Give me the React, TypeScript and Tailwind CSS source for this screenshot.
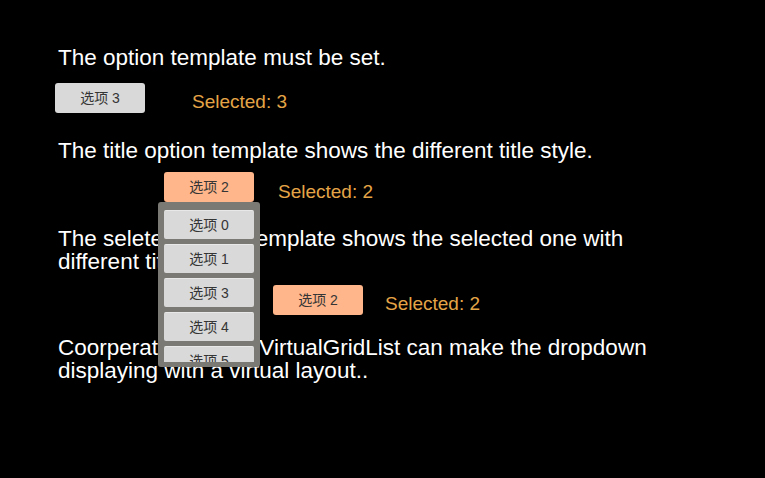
import React from 'react';

const FONT = { fontFamily: '"Liberation Sans", Arial, "Noto Sans CJK SC", sans-serif' };

const OPTIONS = ['选项 0', '选项 1', '选项 3', '选项 4', '选项 5', '选项 6'];

function Picker({ label, tone, open }: { label: string; tone: 'grey' | 'peach'; open?: boolean }) {
  return (
    <div className="relative">
      <button
        className={`w-[90px] h-[30px] rounded-[3px] text-[14px] text-[#353535] flex items-center justify-center ${
          tone === 'peach' ? 'bg-[#ffb68a]' : 'bg-[#d9d9d9]'
        }`}
      >
        {label}
      </button>
      {open && (
        <div className="absolute left-[-6px] top-[30px] w-[102px] h-[165px] bg-[#7a7973] rounded-[3px] px-[6px] pt-[8px] pb-[5px] z-10">
          <div className="h-full overflow-hidden flex flex-col gap-[5px]">
            {OPTIONS.map((o) => (
              <div
                key={o}
                className="h-[29px] shrink-0 bg-[#d9d9d9] border-t border-[#e8e8e8] rounded-[2px] text-[14px] text-[#353535] flex items-center justify-center"
              >
                {o}
              </div>
            ))}
          </div>
        </div>
      )}
    </div>
  );
}

function Row({ label, tone, open, selected, className, gap }: { label: string; tone: 'grey' | 'peach'; open?: boolean; selected: string; className: string; gap: string }) {
  return (
    <div className={`flex items-center h-[30px] ${className}`}>
      <Picker label={label} tone={tone} open={open} />
      <span className={`${gap} text-[19px] leading-[22px] text-[#e5a547]`}>Selected: {selected}</span>
    </div>
  );
}

export default function App() {
  return (
    <div className="w-[765px] h-[478px] bg-black text-white overflow-hidden" style={FONT}>
      <div className="pl-[58px] pt-[46px] w-[680px]">
        <p className="text-[22.5px] leading-[23px]">The option template must be set.</p>
        <Row label="选项 3" tone="grey" selected="3" gap="ml-[47px] mt-[7px]" className="mt-[14px] -ml-[3px]" />

        <p className="mt-[26px] text-[22.5px] leading-[23px]">The title option template shows the different title style.</p>
        <Row label="选项 2" tone="peach" open selected="2" gap="ml-[24px] mt-[9px]" className="mt-[10px] ml-[106px]" />

        <p className="mt-[25px] text-[22.5px] leading-[23px]">
          The seleted option template shows the selected one with different title style.
        </p>
        <Row label="选项 2" tone="peach" selected="2" gap="ml-[22px] mt-[7px]" className="mt-[12px] ml-[215px]" />

        <p className="mt-[21px] text-[22.5px] leading-[23px]">
          Coorperating with a VirtualGridList can make the dropdown displaying with a virtual layout..
        </p>
      </div>
    </div>
  );
}
